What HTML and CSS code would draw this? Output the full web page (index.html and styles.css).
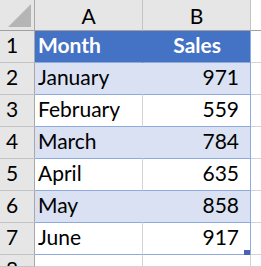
FILE: index.html
```html
<!DOCTYPE html>
<html>
<head>
<meta charset="utf-8">
<link rel="stylesheet" href="styles.css">
</head>
<body>
<div class="sheet">
  <div class="rh corner"><svg width="34" height="30" viewBox="0 0 34 30"><polygon points="8,27 31,4 31,27" fill="#b5b5b5"/></svg></div>
  <div class="ch">A</div>
  <div class="ch">B</div>
  <div class="ch rest"></div>

  <div class="rh">1</div>
  <div class="c th">Month</div>
  <div class="c th num last">Sales</div>
  <div class="c rest"></div>

  <div class="rh">2</div>
  <div class="c band">January</div>
  <div class="c band num last">971</div>
  <div class="c rest"></div>

  <div class="rh">3</div>
  <div class="c plain">February</div>
  <div class="c plain num last">559</div>
  <div class="c rest"></div>

  <div class="rh">4</div>
  <div class="c band">March</div>
  <div class="c band num last">784</div>
  <div class="c rest"></div>

  <div class="rh">5</div>
  <div class="c plain">April</div>
  <div class="c plain num last">635</div>
  <div class="c rest"></div>

  <div class="rh">6</div>
  <div class="c band">May</div>
  <div class="c band num last">858</div>
  <div class="c rest"></div>

  <div class="rh">7</div>
  <div class="c plain">June</div>
  <div class="c plain num last">917<span class="handle"></span></div>
  <div class="c rest"></div>

  <div class="rh">8</div>
  <div class="c empty"></div>
  <div class="c empty"></div>
  <div class="c rest"></div>
</div>
</body>
</html>
```

FILE: styles.css
```css
html, body {
  margin: 0;
  padding: 0;
  background: #ffffff;
}

.sheet {
  display: grid;
  grid-template-columns: 35px 108px 108px 1fr;
  grid-template-rows: 31px repeat(7, 32px) 1fr;
  width: 261px;
  height: 267px;
  overflow: hidden;
  font-family: Lato, "Liberation Sans", sans-serif;
  font-size: 21px;
  color: #000000;
}

.sheet > div {
  box-sizing: border-box;
  border-right: 1px solid #d4d4d4;
  border-bottom: 1px solid #d4d4d4;
  white-space: nowrap;
  overflow: hidden;
}

.rh {
  background: #e6e6e6;
  border-right: 1px solid #a8a8a8 !important;
  border-bottom-color: #c4c4c4 !important;
  padding-right: 10px;
  text-align: center;
  line-height: 28px;
}

.corner {
  padding: 0 !important;
  border-bottom: 1px solid #a0a0a0 !important;
  line-height: 0 !important;
}

.corner svg {
  display: block;
}

.ch {
  background: #e6e6e6;
  border-right-color: #c4c4c4 !important;
  border-bottom: 1px solid #a0a0a0 !important;
  text-align: center;
  line-height: 29px;
  padding-top: 1px;
}

.c {
  line-height: 28px;
  padding-left: 3px;
  padding-right: 11px;
  position: relative;
  overflow: visible !important;
}

.num {
  text-align: right;
}

.th {
  background: #4472c4;
  color: #ffffff;
  font-weight: bold;
  border-right-color: #4472c4 !important;
  border-bottom-color: #8ea9db !important;
}

.th.num {
  padding-right: 29px;
}

.band {
  background: #d9e1f2;
  border-right-color: #d9e1f2 !important;
  border-bottom-color: #8ea9db !important;
}

.plain {
  background: #ffffff;
  border-bottom-color: #8ea9db !important;
}

.last {
  border-right-color: #8ea9db !important;
}

.rest {
  background: #ffffff;
}

.handle {
  position: absolute;
  right: 0;
  bottom: -1px;
  width: 6px;
  height: 5px;
  background: #4a61b5;
}
```
